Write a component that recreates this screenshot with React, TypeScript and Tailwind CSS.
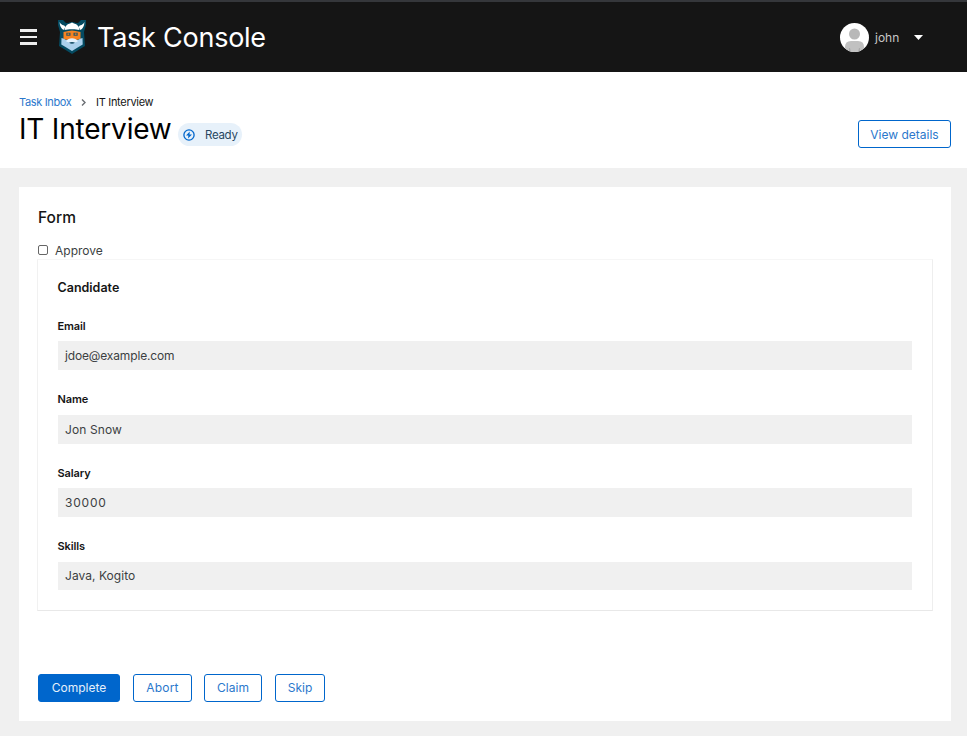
import React from "react";

const fields = [
  { label: "Email", value: "jdoe@example.com", labelClass: "leading-[16px]", valueClass: "h-[29px] tracking-[-0.15px]" },
  { label: "Name", value: "Jon Snow", labelClass: "leading-[15px]", valueClass: "h-[29px] tracking-[0.1px]" },
  { label: "Salary", value: "30000", labelClass: "leading-[16px]", valueClass: "h-[29px] tracking-[0.8px]" },
  { label: "Skills", value: "Java, Kogito", labelClass: "leading-[15px]", valueClass: "h-[28px] tracking-[0.05px]" },
];

function Logo() {
  return (
    <svg className="ml-[21px] h-[34px] w-[28px] shrink-0" viewBox="0 0 28 34">
      <path d="M0 0h5l3 3h2q4-2 8 0h2l3-3h5v5l-2 7 1 14-5 3-8 5-8-5-5-3 1-14-2-7z" fill="#044a61" />
      <path d="M1.5 2q1 2 3 3 2 0 3 2l-2 3Q2 8 1.5 2zM26.5 2q-1 2-3 3-2 0-3 2l2 3q3.500-2 4-8z" fill="#fff" />
      <path d="M6.500 10Q7 4.500 12 3.500l2-1 2 1q5 1 5.500 6.500l-5-.8h-5z" fill="#fff" />
      <path d="m5.500 12 5-1 3.500-.5 3.500.5 5 1v7l-4 1-4.500-1-4.500 1-4-1z" fill="#f58220" />
      <path d="M8.300 12.800h4.200v3H8.300zM15.500 12.800h4.200v3h-4.200z" fill="#2b5661" />
      <path d="M9.500 13.500h1.700v1.300H9.500zM16.800 13.500h1.700v1.300h-1.700z" fill="#f58220" />
      <path d="M3.500 18q2.500.5 4.500 2h12q2-1.500 4.500-2l.2 6.500-4.200 2.500-6.500 4L7.500 27l-4.200-2.500z" fill="#a9cfeb" />
      <path d="M8 21.300q2-3 6-3t6 3q-2.500 1.700-6 .8-3.500.9-6-.8z" fill="#e3f1fc" />
      <path d="M11 22.700q3-1.200 6 0-3 2-6 0z" fill="#174e65" />
    </svg>
  );
}

function Avatar() {
  return (
    <svg className="h-[29px] w-[29px]" viewBox="0 0 29 29">
      <defs>
        <clipPath id="avatar"><circle cx="14.5" cy="14.5" r="14.5" /></clipPath>
      </defs>
      <g clipPath="url(#avatar)">
        <path fill="#fff" d="M0 0h29v29H0z" />
        <circle cx="14.5" cy="11" r="5.5" fill="#b8b8b8" />
        <path d="M5 29v-5q0-6 6-6h7q6 0 6 6v5z" fill="#c1c1c1" />
        <path d="M9 29v-4h1l1 4zM18 29l1-4h1v4z" fill="#aaa" />
      </g>
    </svg>
  );
}

const button = "flex h-7 items-center justify-center rounded-[3px] border border-[#06c] text-[12px] leading-none";

export default function App() {
  return (
    <div className="h-[736px] w-[967px] overflow-hidden bg-[#f0f0f0] font-['Inter','Liberation_Sans',sans-serif] text-[#151515]">
      <header className="flex h-[72px] items-center border-t-2 border-[#35373b] bg-[#151515] pl-5 text-white">
        <button aria-label="Menu" className="flex w-[17px] flex-col gap-1">
          <span className="h-[3px] bg-[#ededed]" />
          <span className="h-[2px] bg-[#ededed]" />
          <span className="h-[3px] bg-[#ededed]" />
        </button>
        <Logo />
        <span className="ml-[11px] pt-[2px] text-[27px] leading-8 tracking-[-0.25px] whitespace-nowrap">Task Console</span>
        <div className="mr-[44px] ml-auto flex items-center">
          <Avatar />
          <span className="ml-[6px] w-[39px] pt-[2px] text-[12px] text-[#c8c8c8]">john</span>
          <svg className="h-[5px] w-[9px]" viewBox="0 0 9 5"><path d="M0 0h9L4.5 5z" fill="#fff" /></svg>
        </div>
      </header>

      <section className="flex h-24 items-start justify-between bg-white pr-4 pl-[19px]">
        <div className="pt-[22px]">
          <nav className="flex h-4 items-center text-[11px]">
            <a className="w-[62px] tracking-[-0.35px] text-[#2b78cc]">Task Inbox</a>
            <svg className="mr-[10px] h-[7px] w-[5px]" viewBox="0 0 5 7"><path d="m1 .5 3 3-3 3" fill="none" stroke="#6a6e73" strokeWidth="1.4" /></svg>
            <span className="tracking-[-0.3px]">IT Interview</span>
          </nav>
          <div className="flex items-start">
            <h1 className="w-[159px] text-[28px] leading-[38px] tracking-[-0.2px] whitespace-nowrap text-black">IT Interview</h1>
            <span className="mt-[13px] flex h-[23px] w-16 items-center rounded-full bg-[#e7f1fa] pl-[5px] text-[11.5px] tracking-[-0.3px] text-[#284761]">
              <svg className="mr-[10px] h-3 w-3" viewBox="0 0 12 12">
                <circle cx="6" cy="6" r="5.1" fill="none" stroke="#06c" strokeWidth="1.3" />
                <path d="M6.8 2.5 3 6.5h2.4L5 9.5l4-4H6.5z" fill="#06c" />
              </svg>
              <span className="pt-[2px]">Ready</span>
            </span>
          </div>
        </div>
        <button className={`${button} mt-12 w-[93px] bg-white pt-px text-[#2b78cc]`}>View details</button>
      </section>

      <main className="mt-[19px] mr-4 ml-[19px] h-[534px] bg-white px-[19px] pt-5">
        <h2 className="h-[21px] text-[15.5px] leading-[21px] font-medium">Form</h2>
        <label className="mt-[14px] flex h-[17px] items-center">
          <input type="checkbox" className="m-0 mb-[2px] h-[10px] w-[10px] appearance-none rounded-[2px] border border-[#666] bg-white" />
          <span className="ml-[7px] pt-px text-[12px] leading-4 text-[#3c3f42]">Approve</span>
        </label>
        <section className="mr-[-1px] ml-[-1px] h-[352px] border border-t-[#f6f6f6] border-r-[#eee] border-b-[#e8e8e8] border-l-[#f1f1f1] pr-[19px] pl-[19.5px] pt-[18px]">
          <h3 className="h-5 text-[12.5px] leading-5 font-semibold">Candidate</h3>
          <div className="mt-[20px] flex flex-col gap-[21.5px]">
            {fields.map((f) => (
              <div key={f.label} className="h-[52px] w-[854.5px]">
                <div className={`h-[17px] text-[11px] font-semibold tracking-[-0.1px] ${f.labelClass}`}>{f.label}</div>
                <div className={`mt-[6px] ml-[0.5px] flex items-center bg-[#f0f0f0] pt-px pl-[7px] text-[12px] text-[#3c3f42] ${f.valueClass}`}>{f.value}</div>
              </div>
            ))}
          </div>
        </section>
        <div className="mt-[63px] flex text-[#2b78cc]">
          <button className={`${button} w-[82px] bg-[#06c] text-[#e5f0fb]`}>Complete</button>
          <button className={`${button} ml-[13px] w-[59px] tracking-[0.2px]`}>Abort</button>
          <button className={`${button} ml-3 w-[58px]`}>Claim</button>
          <button className={`${button} ml-[13px] w-[50px]`}>Skip</button>
        </div>
      </main>
    </div>
  );
}
